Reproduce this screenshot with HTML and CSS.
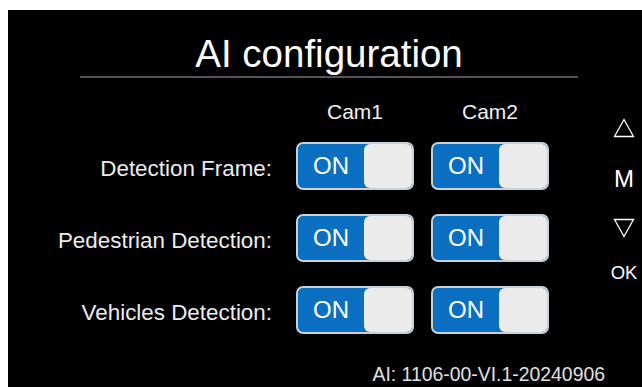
FILE: index.html
```html
<!DOCTYPE html>
<html>
<head>
<meta charset="utf-8">
<link rel="stylesheet" href="styles.css">
</head>
<body>
<div class="screen">
  <div class="header"><h1 class="title">AI configuration</h1></div>
  <div class="main">
    <div class="grid">
      <div></div>
      <div class="cam">Cam1</div>
      <div class="cam">Cam2</div>

      <div class="label">Detection Frame:</div>
      <div class="toggle"><span class="on">ON</span><span class="knob"></span></div>
      <div class="toggle"><span class="on">ON</span><span class="knob"></span></div>

      <div class="label">Pedestrian Detection:</div>
      <div class="toggle"><span class="on">ON</span><span class="knob"></span></div>
      <div class="toggle"><span class="on">ON</span><span class="knob"></span></div>

      <div class="label">Vehicles Detection:</div>
      <div class="toggle"><span class="on">ON</span><span class="knob"></span></div>
      <div class="toggle"><span class="on">ON</span><span class="knob"></span></div>
    </div>
    <div class="nav">
      <svg class="tri up" width="22" height="20" viewBox="0 0 22 20"><path d="M11 1.5 L20.5 18.5 L1.5 18.5 Z" fill="none" stroke="#fff" stroke-width="1.3" stroke-linejoin="miter"/></svg>
      <div class="m">M</div>
      <svg class="tri down" width="22" height="20" viewBox="0 0 22 20"><path d="M1.5 1.5 L20.5 1.5 L11 18.5 Z" fill="none" stroke="#fff" stroke-width="1.3" stroke-linejoin="miter"/></svg>
      <div class="ok">OK</div>
    </div>
  </div>
  <div class="footer">AI: 1106-00-VI.1-20240906</div>
</div>
</body>
</html>
```
FILE: styles.css
```css
html, body { margin: 0; padding: 0; background: #fff; }
body { padding: 10px 0 0 8px; }
.screen {
  background: #000;
  width: 634px;
  height: 377px;
  color: #fff;
  font-family: "Liberation Sans", Arial, sans-serif;
  display: flex;
  flex-direction: column;
  overflow: hidden;
}
.header {
  width: 498px;
  margin-left: 72px;
  padding-top: 22px;
  border-bottom: 2px solid #555;
  text-align: center;
}
.title {
  margin: 0;
  font-weight: normal;
  font-size: 38.5px;
  line-height: 44px;
  color: #fff;
}
.main { display: flex; }
.grid {
  display: grid;
  grid-template-columns: 271px 118px 118px;
  grid-template-rows: 18px repeat(3, 48px);
  column-gap: 17px;
  row-gap: 24px;
  padding-top: 22px;
}
.cam {
  text-align: center;
  font-size: 21px;
  line-height: 24px;
  color: #f2f2f2;
  align-self: start;
}
.label {
  text-align: right;
  padding-right: 7px;
  font-size: 22.4px;
  line-height: 26px;
  color: #ececec;
  align-self: center;
  margin-top: 5px;
}
.toggle {
  box-sizing: border-box;
  height: 48px;
  border: 2px solid #c8d0d8;
  border-radius: 7px;
  background: #0b6fc1;
  display: flex;
  overflow: hidden;
}
.on {
  flex: 1;
  padding-left: 15px;
  font-size: 24px;
  line-height: 44px;
  color: #fff;
}
.knob {
  width: 48px;
  background: #ebebeb;
  border-radius: 6px 5px 5px 6px;
}
.nav {
  width: 34px;
  margin-left: 58px;
  display: flex;
  flex-direction: column;
  align-items: center;
  padding-top: 40px;
  color: #fff;
}
.tri { display: block; }
.m { font-size: 24px; line-height: 24px; margin-top: 29px; }
.down { margin-top: 27px; }
.ok { font-size: 18.5px; line-height: 20px; margin-top: 25px; }
.footer {
  margin-top: auto;
  text-align: right;
  padding-right: 37px;
  padding-bottom: 2px;
  font-size: 19.4px;
  line-height: 22px;
  color: #e0e0e0;
}
```
